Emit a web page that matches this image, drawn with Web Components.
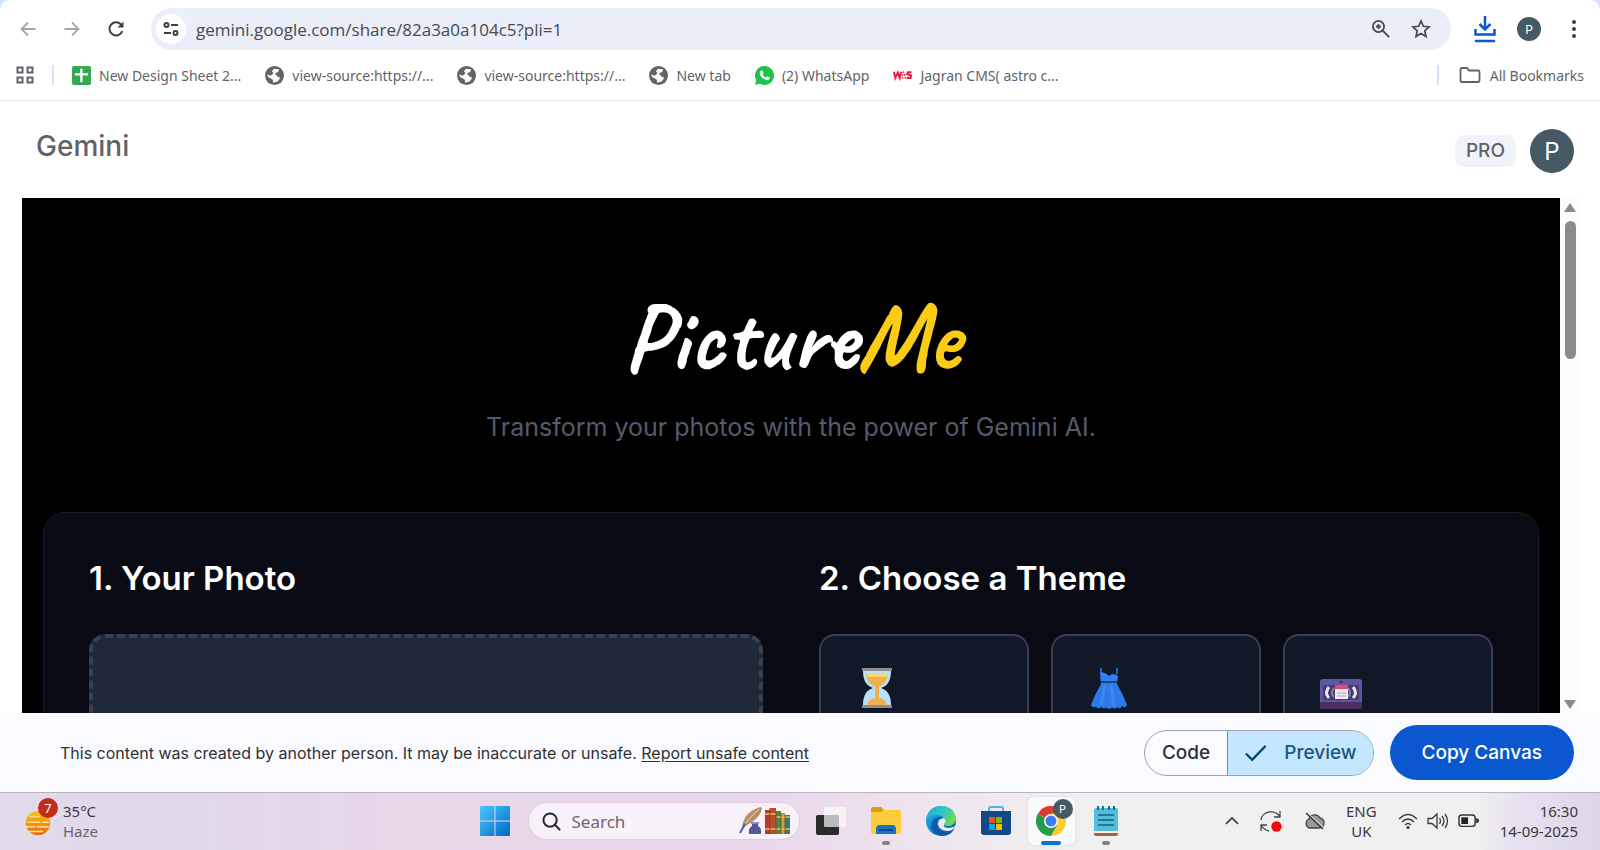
<!DOCTYPE html>
<html lang="en">
<head>
<meta charset="utf-8">
<title>Gemini - PictureMe</title>
<style>
  html, body {
    margin: 0;
    height: 100%;
  }

  body {
    display: flex;
    flex-direction: column;
    overflow: hidden;
    background: #fff;
    font-family: "Open Sans", "Noto Sans", sans-serif;
    color: #5f6368;
  }

  canvas-frame {
    flex: 1;
    min-height: 0;
  }
</style>
</head>
<body>
  <browser-toolbar></browser-toolbar>
  <bookmarks-bar>
    <bookmark-item icon="sheet">New Design Sheet 2...</bookmark-item>
    <bookmark-item icon="globe">view-source:https://...</bookmark-item>
    <bookmark-item icon="globe">view-source:https://...</bookmark-item>
    <bookmark-item icon="globe">New tab</bookmark-item>
    <bookmark-item icon="whatsapp">(2) WhatsApp</bookmark-item>
    <bookmark-item icon="was">Jagran CMS( astro c...</bookmark-item>
  </bookmarks-bar>
  <gemini-header></gemini-header>
  <canvas-frame>
    <picture-me>
      <theme-card icon="hourglass" label="Decades"></theme-card>
      <theme-card icon="dress" label="Style Lookbook"></theme-card>
      <theme-card icon="cassette" label="Eighties Mall"></theme-card>
    </picture-me>
  </canvas-frame>
  <share-footer></share-footer>
  <win-taskbar>
    <task-app icon="taskview" label="Task view"></task-app>
    <task-app icon="explorer" label="File Explorer" running></task-app>
    <task-app icon="edge" label="Microsoft Edge"></task-app>
    <task-app icon="store" label="Microsoft Store"></task-app>
    <task-app icon="chrome" label="Google Chrome" active></task-app>
    <task-app icon="notepad" label="Notepad" running></task-app>
  </win-taskbar>

<script>
  // name: [viewBox, markup]
  const ICONS = {
    back: ['0 0 20 20', '<path d="M17.500 10H3.500M10 3.500L3.500 10l6.500 6.500" fill="none" stroke="#a4a6a9" stroke-width="1.800"/>'],
    forward: ['0 0 20 20', '<path d="M2.500 10h14M10 3.500l6.500 6.500-6.500 6.500" fill="none" stroke="#a4a6a9" stroke-width="1.800"/>'],
    reload: ['0 0 20 20', '<path d="M16.300 12.200A6.600 6.600 0 1 1 14.800 5.300L16.500 7" fill="none" stroke="#3c4043" stroke-width="2"/><path d="M17.500 2.500v6h-6z" fill="#3c4043"/>'],
    tune: ['0 0 18 18', '<g fill="none" stroke="#3c4043" stroke-width="2"><circle cx="4.500" cy="5" r="2"/><path d="M9 5h7M2 13h7"/><circle cx="13.500" cy="13" r="2"/></g>'],
    zoom: ['0 0 20 20', '<g fill="none" stroke="#45494d" stroke-width="1.800"><circle cx="7.500" cy="7.500" r="5.600"/><path d="M11.700 11.700l6.500 6.500M7.500 5v5M5 7.500h5"/></g>'],
    star: ['0 0 20 20', '<path d="M10 2l2.400 5.300 5.700.6-4.300 3.900 1.200 5.700-5-2.900-5 2.900 1.200-5.700L1.900 7.900l5.700-.6z" fill="none" stroke="#45494d" stroke-width="1.700"/>'],
    download: ['0 0 22 28', '<g fill="none" stroke="#0b57d0" stroke-width="2.500"><path d="M11 1v13M5.500 9l5.500 5.500L16.500 9M1.500 14v5.500h19V14"/><path d="M2 26h18" stroke-linecap="round"/></g>'],
    dots: ['0 0 6 20', '<g fill="#3c4043"><circle cx="3" cy="3" r="2"/><circle cx="3" cy="10" r="2"/><circle cx="3" cy="17" r="2"/></g>'],
    apps: ['0 0 18 18', '<g fill="none" stroke="#5f6368" stroke-width="2"><path d="M1.500 1.500h5v5h-5zM11.500 1.500h5v5h-5zM1.500 11.500h5v5h-5zM11.500 11.500h5v5h-5z"/></g>'],
    folder: ['0 0 22 18', '<path d="M1.500 14.500v-11q0-1.500 1.500-1.500h5l2 2.500h9q1.500 0 1.500 1.500v8.500q0 1.500-1.500 1.500H3q-1.500 0-1.500-1.500z" fill="none" stroke="#5f6368" stroke-width="1.800"/>'],
    sheet: ['0 0 20 20', '<rect width="20" height="20" rx="2" fill="#34a853"/><path d="M8.700 3h2.400v4.500H17v2.400h-5.900V17H8.700V9.900H3V7.500h5.700z" fill="#fff"/>'],
    globe: ['0 0 18 18', '<circle cx="9" cy="9" r="9" fill="#5f6368"/><path d="M8.500 2.500l4.500.5q1 2-1 3-2 0-2.500 2l2 1q0 2 2.500 1.500.5 2.500-3 4.500-2 1-3.500.5.500-3-1.500-3.500Q2.500 11 2 8q3 1.500 4.500.5Q9 7 6.500 5z" fill="#fff"/>'],
    whatsapp: ['0 0 18 18', '<path d="M9 0a9 9 0 1 1-4.300 16.900L0 18l1.200-4.500A9 9 0 0 1 9 0z" fill="#1fc24b"/><path d="M5.500 4.500l1.500-.3 1.200 2.600-1 1.200q1 2.200 3.200 3l1.200-1.200 2.400 1.200q.2 2-2.300 2.400-3.700-.2-6.300-4-2-3 .1-4.900z" fill="#fff"/>'],
    was: ['0 0 20 18', '<g fill="none" stroke="#e6203f" stroke-width="2.200"><path d="M1 6l1.500 6.500L5 7l2 5.500L8.500 6"/><path d="M19.500 6.500h-3.800L15 8.500l4 1.500-.6 2.500h-4"/></g><g fill="#e6203f"><circle cx="11" cy="6.500" r="1"/><circle cx="10" cy="9.500" r="1"/><circle cx="12.500" cy="9.500" r="1"/><circle cx="10" cy="12.500" r="1"/><circle cx="13" cy="12.500" r="1"/></g>'],
    check: ['0 0 24 20', '<path d="M2 11l6.500 6.500L22.500 3" fill="none" stroke="#004a77" stroke-width="2.400"/>'],
    hourglass: ['0 0 42 42', `
      <path d="M7 4h28q0 14-10 17 10 3 10 17H7q0-14 10-17Q7 18 7 4z" fill="#b9e1fb"/>
      <path d="M10 7h22q-1 10-9 12.500V31q7 1 8 7H11q1-6 8-7V19.500Q11 17 10 7z" fill="#f2b04a"/>
      <path d="M10 6h22l-1 4H11z" fill="#fbd76b"/>
      <path d="M6 1h30v3H6zM6 38h30v3H6z" fill="#8d8c92"/>`],
    dress: ['0 0 42 42', `
      <path d="M13 1v6M29 1v6" stroke="#1f5fd0" stroke-width="2"/>
      <path d="M12 5q5 0 9 4 4-4 9 0l-1 8h-16z" fill="#2f80f5"/>
      <path d="M13 17h16q6 10 10 21-2 4-5 1-2 4-5 1-2 3-5 .5-3 2.500-6 0-2 2-5-.5-3 3-5-.5-3 2-5-1.500Q7 27 13 17z" fill="#2b7bea"/>
      <path d="M17 18l-4 20M23 18l3 21" stroke="#4d98fb" stroke-width="3" opacity=".5"/>
      <path d="M13 14h16v2H13z" fill="#2c3c83"/>`],
    cassette: ['0 0 42 42', `
      <rect y="12" width="42" height="30" rx="3" fill="#6054a4"/>
      <path d="M0 35h42v4q0 3-3 3H3q-3 0-3-3z" fill="#49305f"/>
      <path d="M19 16l2-3 2 3z" fill="#362a60"/>
      <rect x="3" y="18" width="36" height="15" rx="2" fill="#453a68"/>
      <path d="M9 20q-5 6 0 11M33 20q5 6 0 11" fill="none" stroke="#e8e2ef" stroke-width="3"/>
      <path d="M14 21q-4 5 0 9M28 21q4 5 0 9" fill="none" stroke="#8c82a8" stroke-width="2"/>
      <path d="M15 19h13v13H15z" fill="#f1ebf4"/><path d="M15 18h13v4H15z" fill="#e84b6e"/>
      <path d="M17 26h9M17 29h9" stroke="#a9a0b8"/>`],
    haze: ['0 0 30 28', `
      <defs><linearGradient id="hz" x2="0" y2="1"><stop stop-color="#fac30f"/><stop offset="1" stop-color="#e8680f"/></linearGradient></defs>
      <circle cx="15" cy="14" r="13" fill="url(#hz)"/>
      <path d="M7 7h9M4 13h13M20 13h6M2 18h9M14 18h12M0 23h20" stroke="#ffdf94" stroke-width="1.600" stroke-linecap="round"/>`],
    windows: ['0 0 30 30', `
      <defs><linearGradient id="wn" x2="1" y2="1"><stop stop-color="#4cc8fb"/><stop offset="1" stop-color="#0067c6"/></linearGradient></defs>
      <path d="M1 0h13.500v14.500H0V1q0-1 1-1zM15.500 0H29q1 0 1 1v13.500H15.500zM0 15.500h14.500V30H1q-1 0-1-1zM15.500 15.500H30V29q0 1-1 1H15.500z" fill="url(#wn)"/>`],
    search: ['0 0 20 20', '<g fill="none" stroke="#2d2b30" stroke-width="2.200"><circle cx="8.500" cy="8.500" r="7"/><path d="M13.500 13.500l5 5" stroke-linecap="round"/></g>'],
    books: ['0 0 52 30', `
      <path d="M4 21Q6 6 22 1q3 0 1 5-4 8-14 13l-4 3z" fill="#b98d68"/><path d="M8 17Q14 9 21 3" stroke="#f0d9bf" fill="none"/>
      <path d="M7 18l-5 9" stroke="#4169b0" stroke-width="2"/>
      <path d="M14 17h6v3q4 2 3 8H11q-1-6 3-8z" fill="#55579f"/><path d="M13 16h8v2h-8z" fill="#8d8ac6"/>
      <path d="M27 4h5v24h-5z" fill="#b53c2d"/><path d="M32 2h6v26h-6z" fill="#c14a2a"/><path d="M38 5h5v23h-5z" fill="#4b8b43"/><path d="M43 7h4v21h-4z" fill="#d59a33"/><path d="M47 9h5v19h-5z" fill="#2f7e74"/>
      <path d="M27 8h11M38 11h14M27 23h25" stroke="#e9bd58" stroke-width="1.500"/><path d="M32 2v26M38 5v23M43 7v21M47 9v19" stroke="#6b3d23" stroke-width=".7"/>`],
    taskview: ['0 0 30 30', '<rect y="9" width="23" height="20" rx="2" fill="#2b2a2c"/><rect x="8" y="1" width="22" height="20" rx="2" fill="#f5f3f5"/><path d="M8 9h15v12H10q-2 0-2-2z" fill="#bdbabd"/>'],
    explorer: ['0 0 30 30', `
      <path d="M0 3q0-2 2-2h8l3 3v5H0z" fill="#dc9a13"/>
      <path d="M0 6h10l3-2h15q2 0 2 2v20q0 2-2 2H2q-2 0-2-2z" fill="#fdcc3d"/>
      <path d="M5 28v-5q0-4 4-4h12q4 0 4 4v5z" fill="#1673c5"/><path d="M9 24h12" stroke="#07498c" stroke-width="2" stroke-linecap="round"/>`],
    edge: ['0 0 30 30', `
      <defs><linearGradient id="ea" x2="1" y2="1"><stop offset=".2" stop-color="#1ba6dd"/><stop offset="1" stop-color="#0b4fa3"/></linearGradient>
      <linearGradient id="eb" x2="1" y2=".4"><stop stop-color="#1ea5dc"/><stop offset=".6" stop-color="#35c5c5"/><stop offset="1" stop-color="#66dc55"/></linearGradient></defs>
      <circle cx="15" cy="15" r="15" fill="url(#ea)"/>
      <path d="M0 14Q2 0 16 0q13 1 14 13-1 7-8 7-5 0-4-3 2-8-7-8Q4 9 0 14z" fill="url(#eb)"/>
      <path d="M17 12q-6 0-6 6 2 8 10 8 4 0 7-3-3 7-12 7Q5 28 5 19q1-7 8-8 3 0 4 1z" fill="#0e59a8"/>
      <path d="M18 12q3 3 0 6-1 4 4 4 4 0 7-2-2 5-7 5-9 0-10-7 0-5 6-6z" fill="#f0e7f2"/>`],
    store: ['0 0 30 30', `
      <path d="M8 7V3q0-2 2-2h10q2 0 2 2v4" fill="none" stroke="#4ab5ea" stroke-width="2"/>
      <path d="M0 5h30v21q0 3-3 3H3q-3 0-3-3z" fill="#124883"/>
      <path d="M8 11h6v6H8z" fill="#f25022"/><path d="M15 11h6v6h-6z" fill="#7fba00"/><path d="M8 18h6v6H8z" fill="#00a4ef"/><path d="M15 18h6v6h-6z" fill="#ffb900"/>`],
    chrome: ['0 0 30 30', `
      <path d="M15 15L2 7.500a15 15 0 0 1 26 0z" fill="#e03a30"/>
      <path d="M15 15L2 7.500A15 15 0 0 0 15 30l6.500-11z" fill="#259d48"/>
      <path d="M15 15l6.500 3.700L15 30A15 15 0 0 0 28 7.500H15z" fill="#fccb2e"/>
      <circle cx="15" cy="15" r="7" fill="#fff"/><circle cx="15" cy="15" r="5.500" fill="#3b7ded"/>`],
    notepad: ['0 0 30 30', `
      <path d="M3 25h24v3q0 2-2 2H5q-2 0-2-2z" fill="#b05f33"/><path d="M3 24h24v3H3z" fill="#f3eee8"/>
      <path d="M3 4q0-2 2-2h20q2 0 2 2v21H3z" fill="#54bddb"/>
      <path d="M7 0v4M12 0v4M18 0v4M23 0v4" stroke="#1c6c88" stroke-width="2"/><path d="M7 9h16M7 14h16M7 19h16" stroke="#146080" stroke-width="1.600"/>`],
    chevron: ['0 0 14 14', '<path d="M1 10l6-6 6 6" fill="none" stroke="#333" stroke-width="1.600"/>'],
    sync: ['0 0 22 22', '<g fill="none" stroke="#444" stroke-width="1.300"><path d="M1 10A10 9 0 0 1 20 7M20 1v6h-6M1 21v-6h6M1 15q3 5 8 6"/></g><circle cx="16.500" cy="16.500" r="5.200" fill="#f00b0b"/>'],
    cloud: ['0 0 22 18', '<path d="M6 16a5 5 0 0 1 0-9 6 6 0 0 1 11-1q4 1 4 5 0 5-5 5z" fill="#9a9a9a" stroke="#444" stroke-width="1.300"/><path d="M4 1l17 15" stroke="#d8d8d8" stroke-width="1.500"/><path d="M3 1l17 16" stroke="#333" stroke-width="1.300"/>'],
    wifi: ['0 0 20 18', '<g fill="none" stroke="#3a3a3a" stroke-width="1.400"><path d="M1 7q9-9 18 0M4 10q6-6 12 0M7 13q3-3 6 0"/></g><circle cx="10" cy="15.500" r="1.500" fill="#333"/>'],
    speaker: ['0 0 22 18', '<g fill="none" stroke="#3a3a3a" stroke-width="1.300"><path d="M1 6.500h4L10 2v14l-5-4.500H1z"/><path d="M12.500 6q2 3 0 6M15 4q4 5 0 10M18 2q5 7 0 14"/></g>'],
    battery: ['0 0 22 14', '<rect x="1" y="1" width="17" height="12" rx="3" fill="none" stroke="#333" stroke-width="1.500"/><rect x="3.500" y="3.500" width="7" height="7" fill="#222"/><path d="M19 4.500q3 0 3 2.500t-3 2.500z" fill="#333"/>'],
    arrowup: ['0 0 12 10', '<path d="M6 0l6 9H0z" fill="#8b8b8b"/>'],
    arrowdown: ['0 0 12 10', '<path d="M6 10l6-9H0z" fill="#8b8b8b"/>'],
  };

  /** Base class: stamps the subclass template into an open shadow root. */
  class BaseElement extends HTMLElement {
    connectedCallback() {
      if (this.shadowRoot) {
        return;
      }
      this.attachShadow({ mode: 'open' });
      this.shadowRoot.innerHTML = `
        <style>
          :host, * { box-sizing: border-box; }
          button {
            border: 0;
            padding: 0;
            margin: 0;
            background: none;
            font: inherit;
            color: inherit;
            cursor: pointer;
          }
        </style>
        ${this.template()}`;
    }
  }

  /**
   * Inline icon.
   *
   * Attributes:
   * - name: key in ICONS.
   * - w: width in pixels, the height follows the viewBox.
   */
  class UiIcon extends BaseElement {
    template() {
      const [viewBox, markup] = ICONS[this.getAttribute('name')];
      const width = this.getAttribute('w') || 20;
      return `
        <style>
          :host { display: inline-flex; flex-shrink: 0; }
          svg { display: block; width: ${width}px; }
        </style>
        <svg viewBox="${viewBox}" aria-hidden="true">${markup}</svg>`;
    }
  }
  customElements.define('ui-icon', UiIcon);

  /** Round account badge; size and font size come from custom properties. */
  class UserAvatar extends BaseElement {
    template() {
      return `
        <style>
          :host { display: inline-flex; flex-shrink: 0; }
          span {
            display: flex;
            align-items: center;
            justify-content: center;
            width: var(--avatar-size, 24px);
            height: var(--avatar-size, 24px);
            border-radius: 50%;
            background: #455a64;
            color: #fff;
            font-family: Inter, sans-serif;
            font-size: var(--avatar-font, 12px);
          }
        </style>
        <span><slot></slot></span>`;
    }
  }
  customElements.define('user-avatar', UserAvatar);

  class BrowserToolbar extends BaseElement {
    template() {
      return `
        <style>
          :host { display: block; background: #d3e3fd; }
          nav {
            display: flex;
            align-items: center;
            height: 50px;
            padding: 8px 14px 0 18px;
            border-radius: 10px 10px 0 0;
            background: #fff;
          }
          button { display: flex; justify-content: center; }
          .nav { display: flex; gap: 24px; margin-right: 25px; }
          .address {
            display: flex;
            align-items: center;
            flex: 1;
            height: 42px;
            padding: 0 20px 0 5px;
            border-radius: 21px;
            background: #e9eef8;
          }
          .site {
            align-items: center;
            width: 30px;
            height: 30px;
            border-radius: 50%;
            background: #fff;
          }
          input {
            flex: 1;
            margin: 0 10px;
            padding: 0;
            border: 0;
            outline: 0;
            background: none;
            font: 17px "Open Sans", "Noto Sans", sans-serif;
            color: #474a4e;
          }
          .tools { display: flex; gap: 20px; }
          .end { display: flex; align-items: center; gap: 21px; margin-left: 23px; }
          .menu { width: 24px; }
        </style>
        <nav aria-label="Browser">
          <div class="nav">
            <button aria-label="Back"><ui-icon name="back"></ui-icon></button>
            <button aria-label="Forward"><ui-icon name="forward"></ui-icon></button>
            <button aria-label="Reload"><ui-icon name="reload"></ui-icon></button>
          </div>
          <div class="address">
            <button class="site" aria-label="Site information"><ui-icon name="tune" w="18"></ui-icon></button>
            <input type="text" aria-label="Address" value="gemini.google.com/share/82a3a0a104c5?pli=1">
            <div class="tools">
              <button aria-label="Zoom"><ui-icon name="zoom"></ui-icon></button>
              <button aria-label="Bookmark this tab"><ui-icon name="star"></ui-icon></button>
            </div>
          </div>
          <div class="end">
            <button aria-label="Downloads"><ui-icon name="download" w="22"></ui-icon></button>
            <user-avatar>P</user-avatar>
            <button class="menu" aria-label="Menu"><ui-icon name="dots" w="6"></ui-icon></button>
          </div>
        </nav>`;
    }
  }
  customElements.define('browser-toolbar', BrowserToolbar);

  class BookmarkItem extends BaseElement {
    template() {
      return `
        <style>
          :host { display: inline-flex; }
          a {
            display: flex;
            align-items: center;
            gap: 8px;
            color: #5f6368;
            text-decoration: none;
            white-space: nowrap;
          }
        </style>
        <a href="#"><ui-icon name="${this.getAttribute('icon')}" w="19"></ui-icon><span><slot></slot></span></a>`;
    }
  }
  customElements.define('bookmark-item', BookmarkItem);

  class BookmarksBar extends BaseElement {
    template() {
      return `
        <style>
          :host {
            display: flex;
            align-items: center;
            height: 51px;
            padding: 0 16px;
            border-bottom: 1px solid #e4e6ea;
            font-family: "Noto Sans", sans-serif;
            font-size: 14px;
            color: #5f6368;
          }
          i { width: 2px; height: 20px; background: #d3e3fd; }
          .apps { display: flex; margin-right: 18px; }
          .list { display: flex; flex: 1; gap: 24px; margin-left: 18px; }
          .all { display: flex; align-items: center; gap: 9px; margin-left: 20px; }
        </style>
        <button class="apps" aria-label="Apps"><ui-icon name="apps" w="18"></ui-icon></button>
        <i></i>
        <div class="list"><slot></slot></div>
        <i></i>
        <button class="all"><ui-icon name="folder" w="22"></ui-icon>All Bookmarks</button>`;
    }
  }
  customElements.define('bookmarks-bar', BookmarksBar);

  class GeminiHeader extends BaseElement {
    template() {
      return `
        <style>
          :host {
            display: flex;
            align-items: center;
            height: 97px;
            padding: 3px 26px 0 36px;
            font-family: Inter, sans-serif;
            color: #5f6368;
            --avatar-size: 44px;
            --avatar-font: 24px;
          }
          h1 { flex: 1; margin: 0 0 10px; font-size: 28px; font-weight: 500; }
          span {
            margin-right: 14px;
            padding: 0 11px;
            border-radius: 9px;
            background: #f0f4f9;
            font-size: 19px;
            font-weight: 500;
            line-height: 32px;
          }
        </style>
        <h1>Gemini</h1>
        <span>PRO</span>
        <user-avatar>P</user-avatar>`;
    }
  }
  customElements.define('gemini-header', GeminiHeader);

  /** Clipped preview area with a scrollbar column on the right. */
  class CanvasFrame extends BaseElement {
    template() {
      return `
        <style>
          :host { display: flex; padding: 0 20px 0 22px; }
          .view { flex: 1; min-width: 0; overflow: hidden; background: #000; }
          .scroll {
            display: flex;
            flex-direction: column;
            align-items: center;
            width: 20px;
            padding: 5px 0 4px;
            background: #fcfcfc;
          }
          .thumb { width: 11px; height: 138px; margin-top: 8px; border-radius: 6px; background: #8b8b8b; }
          .gap { flex: 1; }
        </style>
        <div class="view"><slot></slot></div>
        <div class="scroll">
          <ui-icon name="arrowup" w="12"></ui-icon>
          <div class="thumb"></div>
          <div class="gap"></div>
          <ui-icon name="arrowdown" w="12"></ui-icon>
        </div>`;
    }
  }
  customElements.define('canvas-frame', CanvasFrame);

  /** One selectable theme. */
  class ThemeCard extends BaseElement {
    template() {
      return `
        <style>
          :host { display: block; flex: 1; }
          button {
            display: flex;
            align-items: flex-start;
            width: 100%;
            height: 200px;
            padding: 31px 35px;
            border: 2px solid #374151;
            border-radius: 16px;
            background: #111827;
          }
        </style>
        <button aria-label="${this.getAttribute('label')}">
          <ui-icon name="${this.getAttribute('icon')}" w="42"></ui-icon>
        </button>`;
    }
  }
  customElements.define('theme-card', ThemeCard);

  class PictureMe extends BaseElement {
    template() {
      return `
        <style>
          :host { display: block; padding: 93px 21px 0; font-family: Inter, sans-serif; }
          header { text-align: center; }
          h1 {
            margin: 0;
            font: bold 96px/94px Caveat, "Caveat Brush", Lato, sans-serif;
            color: #fff;
          }
          h1 span { color: #facc15; }
          p { margin: 22px 0 0; font-size: 25px; line-height: 40px; color: #545b6a; }
          .panel {
            display: flex;
            gap: 56px;
            margin-top: 65px;
            padding: 43px 45px;
            border: 1px solid #171c26;
            border-radius: 22px;
            background: #080b14;
          }
          section { flex: 1; min-width: 0; }
          h2 { margin: 0 0 34px; font-size: 33px; font-weight: 600; line-height: 44px; color: #fff; }
          .drop {
            display: block;
            width: 100%;
            height: 360px;
            border: 4px dashed #374151;
            border-radius: 16px;
            background: #1f2937;
          }
          .themes { display: flex; gap: 22px; }
        </style>
        <header>
          <h1>Picture<span>Me</span></h1>
          <p>Transform your photos with the power of Gemini AI.</p>
        </header>
        <div class="panel">
          <section>
            <h2>1. Your Photo</h2>
            <button class="drop" aria-label="Upload a photo"></button>
          </section>
          <section>
            <h2>2. Choose a Theme</h2>
            <div class="themes"><slot></slot></div>
          </section>
        </div>`;
    }
  }
  customElements.define('picture-me', PictureMe);

  class ShareFooter extends BaseElement {
    template() {
      return `
        <style>
          :host {
            display: flex;
            align-items: center;
            height: 79px;
            padding: 0 26px 0 60px;
            background: #f9fbff;
            font-family: Inter, sans-serif;
            font-size: 16px;
            color: #303134;
          }
          p { flex: 1; margin: 0; white-space: nowrap; }
          a { color: inherit; text-underline-offset: 2px; }
          .toggle {
            display: flex;
            height: 46px;
            overflow: hidden;
            border: 1px solid #9da3a8;
            border-radius: 23px;
            font-size: 19px;
            font-weight: 500;
          }
          .toggle button { display: flex; align-items: center; padding: 0 17px; }
          .toggle [aria-pressed=true] {
            gap: 17px;
            padding: 0 16px;
            border-left: 1px solid #7c8a94;
            background: #c2e7ff;
            color: #1d557c;
          }
          .copy {
            height: 55px;
            margin-left: 16px;
            padding: 0 32px;
            border-radius: 28px;
            background: #0b57d0;
            color: #fff;
            font-size: 19px;
            font-weight: 500;
          }
        </style>
        <p>This content was created by another person. It may be inaccurate or unsafe. <a href="#">Report unsafe content</a></p>
        <div class="toggle">
          <button aria-pressed="false">Code</button>
          <button aria-pressed="true"><ui-icon name="check" w="23"></ui-icon>Preview</button>
        </div>
        <button class="copy">Copy Canvas</button>`;
    }
  }
  customElements.define('share-footer', ShareFooter);

  /** Taskbar button: `running` draws the small dot, `active` the blue one. */
  class TaskApp extends BaseElement {
    template() {
      const name = this.getAttribute('icon');
      const badge = name === 'chrome' ? '<user-avatar>P</user-avatar>' : '';
      return `
        <style>
          :host { display: block; width: 55px; }
          button {
            position: relative;
            display: flex;
            align-items: center;
            justify-content: center;
            width: 47px;
            height: 48px;
            margin: 0 auto;
            border-radius: 5px;
          }
          button::after {
            content: "";
            position: absolute;
            bottom: 0;
            width: 0;
            height: 4px;
            border-radius: 2px;
            background: #85808a;
          }
          :host([running]) button::after { width: 8px; }
          :host([active]) button { background: #fbfafb; box-shadow: 0 0 1px #aaa; }
          :host([active]) button::after { width: 20px; background: #0078d4; }
          user-avatar {
            position: absolute;
            top: 2px;
            right: 2px;
            --avatar-size: 20px;
            --avatar-font: 11px;
          }
        </style>
        <button aria-label="${this.getAttribute('label')}">
          <ui-icon name="${name}" w="30"></ui-icon>${badge}
        </button>`;
    }
  }
  customElements.define('task-app', TaskApp);

  class WinTaskbar extends BaseElement {
    template() {
      return `
        <style>
          :host {
            display: flex;
            align-items: center;
            height: 58px;
            padding-bottom: 1px;
            border-top: 1px solid #b9b4c0;
            background: linear-gradient(90deg, #e0daeb, #e1d9ea 12%, #e8d6e9 24%, #ead7eb 48%, #efeaef 62%, #f0f0f0 70%, #f0f0f0 92%, #e6e0ef 95%, #ddd6e8);
            font-family: "Noto Sans", sans-serif;
            font-size: 15px;
            line-height: 20px;
            color: #3b3840;
          }
          .side { display: flex; flex: 1; align-items: center; padding: 0 22px; }
          .weather { display: flex; align-items: center; gap: 9px; padding-left: 2px; text-align: left; }
          .sun { position: relative; display: flex; width: 30px; padding-top: 4px; }
          .count {
            position: absolute;
            top: -8px;
            right: -4px;
            width: 20px;
            border-radius: 10px;
            background: #c42b1c;
            color: #fff;
            font-size: 13px;
            text-align: center;
          }
          small { display: block; font-size: inherit; color: #68646e; }
          .start { display: flex; margin: 0 18px 0 13px; }
          .search {
            display: flex;
            align-items: center;
            width: 272px;
            height: 38px;
            padding: 0 9px 0 13px;
            border: 1px solid #ddcee0;
            border-radius: 19px;
            background: #f8f1fa;
          }
          input {
            flex: 1;
            min-width: 0;
            margin: 0 0 0 11px;
            padding: 0;
            border: 0;
            outline: 0;
            background: none;
            font: 17px "Noto Sans", sans-serif;
          }
          input::placeholder { color: #6b6670; opacity: 1; }
          .apps { display: flex; margin-left: 4px; }
          .tray { justify-content: flex-end; gap: 21px; }
          .tray button { display: flex; }
          .status { gap: 9px; align-items: center; }
          .tray .lang { display: block; text-align: center; }
          .tray .clock { display: block; text-align: right; }
        </style>
        <div class="side">
          <button class="weather">
            <span class="sun"><ui-icon name="haze" w="28"></ui-icon><span class="count">7</span></span>
            <span>35°C<small>Haze</small></span>
          </button>
        </div>
        <button class="start" aria-label="Start"><ui-icon name="windows" w="30"></ui-icon></button>
        <div class="search">
          <ui-icon name="search" w="19"></ui-icon>
          <input type="text" placeholder="Search" aria-label="Search">
          <ui-icon name="books" w="52"></ui-icon>
        </div>
        <div class="apps"><slot></slot></div>
        <div class="side tray">
          <button aria-label="Show hidden icons"><ui-icon name="chevron" w="14"></ui-icon></button>
          <button aria-label="Update"><ui-icon name="sync" w="22"></ui-icon></button>
          <button aria-label="OneDrive"><ui-icon name="cloud" w="22"></ui-icon></button>
          <button class="lang">ENG<br>UK</button>
          <button class="status" aria-label="Network, sound and battery">
            <ui-icon name="wifi" w="20"></ui-icon>
            <ui-icon name="speaker" w="22"></ui-icon>
            <ui-icon name="battery" w="21"></ui-icon>
          </button>
          <button class="clock">16:30<br>14-09-2025</button>
        </div>`;
    }
  }
  customElements.define('win-taskbar', WinTaskbar);
</script>
</body>
</html>
